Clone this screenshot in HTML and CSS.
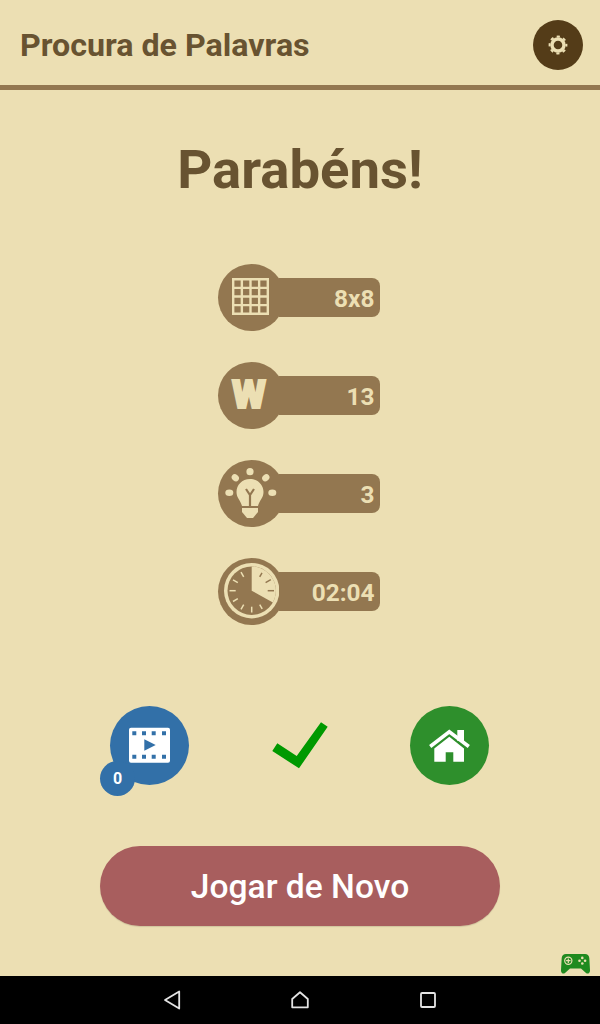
FILE: index.html
```html
<!DOCTYPE html>
<html lang="pt">
<head>
    <meta charset="UTF-8">
    <meta name="viewport" content="width=device-width, initial-scale=1.0">
    <title>Procura de Palavras</title>
    <link rel="stylesheet" href="styles.css">
</head>
<body>

    <header class="top-bar">
        <span class="app-title">Procura de Palavras</span>
        <button class="settings-btn">
            <svg width="24" height="24" viewBox="0 0 24 24">
                <circle cx="12" cy="12" r="6" fill="none" stroke="#ecdfb3" stroke-width="3.4"/>
                <circle cx="12" cy="12" r="8.4" fill="none" stroke="#ecdfb3" stroke-width="2" stroke-dasharray="3.2 3.4" stroke-dashoffset="1.6"/>
            </svg>
        </button>
    </header>

    <main class="content">
        <h1 class="heading">Parabéns!</h1>

        <div class="stats">
            <div class="stat">
                <div class="stat-icon">
                    <svg width="67" height="67" viewBox="0 0 67 67">
                        <path d="M15.2 15.2H49.8V49.8H15.2ZM23.85 15.2V49.8M32.5 15.2V49.8M41.15 15.2V49.8M15.2 23.85H49.8M15.2 32.5H49.8M15.2 41.15H49.8" fill="none" stroke="#ecdfb3" stroke-width="2.4"/>
                    </svg>
                </div>
                <div class="stat-bar">8x8</div>
            </div>
            <div class="stat">
                <div class="stat-icon"><span class="letter-w">W</span></div>
                <div class="stat-bar">13</div>
            </div>
            <div class="stat">
                <div class="stat-icon">
                    <svg width="67" height="67" viewBox="0 0 67 67">
                        <g fill="#ecdfb3">
                            <circle cx="32" cy="11.7" r="3.6"/>
                            <ellipse cx="17.3" cy="17.7" rx="3.9" ry="3.2" transform="rotate(40 17.3 17.7)"/>
                            <ellipse cx="47.8" cy="17.7" rx="3.9" ry="3.2" transform="rotate(-40 47.8 17.7)"/>
                            <ellipse cx="11.3" cy="32.7" rx="4" ry="3.2"/>
                            <ellipse cx="54.3" cy="32.7" rx="4" ry="3.2"/>
                            <path d="M32 19C24 19 18.500 25 18.500 32C18.500 38 22.500 40 24 46H40C41.500 40 45.500 38 45.500 32C45.500 25 40 19 32 19Z"/>
                            <path d="M24 48H40V52L35 58H29L24 52Z"/>
                        </g>
                        <path d="M32 46V35M28 29L32 35L36 29" fill="none" stroke="#937750" stroke-width="2.2"/>
                    </svg>
                </div>
                <div class="stat-bar">3</div>
            </div>
            <div class="stat">
                <div class="stat-icon">
                    <svg width="67" height="67" viewBox="0 0 67 67">
                        <circle cx="33.7" cy="32.7" r="27.7" fill="#ecdfb3"/>
                        <circle cx="33.7" cy="32.7" r="24.200" fill="#937750"/>
                        <path d="M33.7 32.7V8.500A24.200 24.200 0 0 1 54.900 44.400Z" fill="#ecdfb3"/>
                        <g stroke="#937750" stroke-width="1.5">
                            <path d="M41.700 18.800L44 14.800"/>
                            <path d="M47.600 24.700L52.800 21.700"/>
                            <path d="M49.700 32.700H56"/>
                        </g>
                        <g stroke="#ecdfb3" stroke-width="1.5">
                            <path d="M41.700 46.600L44.200 50.900"/>
                            <path d="M33.700 48.700V54.500"/>
                            <path d="M25.700 46.600L23 51.300"/>
                            <path d="M19.800 40.700L15 43.500"/>
                            <path d="M17.700 32.700H11.500"/>
                            <path d="M19.800 24.700L15 21.900"/>
                            <path d="M25.700 18.800L23 14.100"/>
                        </g>
                    </svg>
                </div>
                <div class="stat-bar">02:04</div>
            </div>
        </div>

        <div class="actions">
            <button class="round-btn video-btn">
                <svg width="79" height="79" viewBox="0 0 79 79">
                    <path fill="#fff" fill-rule="evenodd" d="M21 21.700H58Q60 21.700 60 23.700V54.700Q60 56.700 58 56.700H21Q19 56.700 19 54.700V23.700Q19 21.700 21 21.700ZM22.300 25.300V29.300H26.300V25.300ZM32 25.300V29.300H36V25.300ZM41.700 25.300V29.300H45.700V25.300ZM52 25.300V29.300H56V25.300ZM22.300 48.700V52.700H26.300V48.700ZM32 48.700V52.700H36V48.700ZM41.700 48.700V52.700H45.700V48.700ZM52 48.700V52.700H56V48.700ZM34.300 33.300V44.700L45.700 39Z"/>
                </svg>
                <span class="badge">0</span>
            </button>

            <svg class="check" width="56" height="47" viewBox="0 0 56 47">
                <polygon points="0.300,29 5.300,21.300 24.700,34 49,0.300 55.700,4.700 27,46.300" fill="#009900"/>
            </svg>

            <button class="round-btn home-btn">
                <svg width="79" height="79" viewBox="0 0 79 79">
                    <path fill="#fff" d="M47.300 24H54V35H47.300Z"/>
                    <path d="M20.200 40.500L39.300 25.800L58.800 40.500" fill="none" stroke="#fff" stroke-width="3.600"/>
                    <path fill="#fff" d="M24.300 42.500L39.300 30.700L54 42.500V55.700H43.300V46.300H35.700V55.700H24.300Z"/>
                </svg>
            </button>
        </div>

        <button class="play-again">Jogar de Novo</button>

        <svg class="gamepad" width="29" height="20" viewBox="0 0 29 20">
            <path fill="#1f8a1f" d="M5 0H24C26.500 0 28 1.500 28.300 4L29 16C29.200 19 27 20.500 25 19L20 14.500H9L4 19C2 20.500 -0.200 19 0 16L0.700 4C1 1.500 2.500 0 5 0Z"/>
            <circle cx="7.300" cy="6.700" r="3.600" fill="none" stroke="#ecdfb3" stroke-width="1.200"/>
            <path d="M7.300 4.500V8.900M5.100 6.700H9.500" stroke="#ecdfb3" stroke-width="1.200"/>
            <g fill="#ecdfb3">
                <circle cx="21.300" cy="3.900" r="1.300"/>
                <circle cx="21.300" cy="9.500" r="1.300"/>
                <circle cx="18.500" cy="6.700" r="1.300"/>
                <circle cx="24.100" cy="6.700" r="1.300"/>
            </g>
        </svg>
    </main>

    <nav class="nav-bar">
        <div class="nav-item">
            <svg width="18" height="20" viewBox="0 0 18 20">
                <path d="M16.200 1.500V18.500L2 10Z" fill="none" stroke="#e4e4e4" stroke-width="1.800" stroke-linejoin="round"/>
            </svg>
        </div>
        <div class="nav-item">
            <svg width="18" height="18" viewBox="0 0 18 18">
                <path d="M1.200 8L9 1.300L16.800 8V16.300H1.200Z" fill="none" stroke="#e4e4e4" stroke-width="1.800" stroke-linejoin="round"/>
            </svg>
        </div>
        <div class="nav-item">
            <svg width="16" height="16" viewBox="0 0 16 16">
                <rect x="1" y="1" width="14" height="14" rx="1" fill="none" stroke="#e4e4e4" stroke-width="1.800"/>
            </svg>
        </div>
    </nav>

</body>
</html>
```

FILE: styles.css
```css
body {
    font-family: Roboto, "Liberation Sans", sans-serif;
    margin: 0;
    padding: 0;
    height: 1024px;
    overflow: hidden;
    display: flex;
    flex-direction: column;
    background-color: #ecdfb3;
}

button {
    border: none;
    padding: 0;
    font-family: inherit;
}

.top-bar {
    height: 80px;
    flex-shrink: 0;
    display: flex;
    align-items: center;
    justify-content: space-between;
    padding: 5px 17px 0 20px;
    border-bottom: 5px solid #937750;
}

.app-title {
    font-size: 32.2px;
    font-weight: 700;
    color: #685331;
}

.settings-btn {
    width: 50px;
    height: 50px;
    border-radius: 50%;
    background-color: #543c18;
    display: flex;
    align-items: center;
    justify-content: center;
}

.content {
    flex: 1;
    position: relative;
    display: flex;
    flex-direction: column;
    align-items: center;
}

.heading {
    margin: 45px 0 0;
    height: 70px;
    line-height: 69px;
    font-size: 54.5px;
    font-weight: 700;
    color: #685331;
}

.stats {
    margin-top: 59px;
    padding-right: 2px;
    display: flex;
    flex-direction: column;
    gap: 31px;
}

.stat {
    width: 162px;
    display: flex;
    align-items: center;
}

.stat-icon {
    width: 67px;
    height: 67px;
    flex-shrink: 0;
    border-radius: 50%;
    background-color: #937750;
    display: flex;
    align-items: center;
    justify-content: center;
}

.letter-w {
    margin-right: 5px;
    font-size: 39px;
    font-weight: 900;
    line-height: 1;
    color: #ecdfb3;
    -webkit-text-stroke: 2px #ecdfb3;
}

.stat-bar {
    flex: 1;
    height: 39px;
    margin-left: -6px;
    padding-right: 5.5px;
    border-radius: 0 8px 8px 0;
    background-color: #937750;
    color: #ecdfb3;
    font-size: 24.4px;
    font-weight: 700;
    line-height: 41px;
    text-align: right;
}

.actions {
    margin-top: 81px;
    width: 600px;
    box-sizing: border-box;
    padding: 0 111px 0 110px;
    display: flex;
    align-items: center;
    justify-content: space-between;
}

.round-btn {
    position: relative;
    width: 79px;
    height: 79px;
    border-radius: 50%;
    display: block;
}

.round-btn svg {
    display: block;
}

.video-btn {
    background-color: #3270a8;
}

.home-btn {
    background-color: #2e8f2c;
}

.badge {
    position: absolute;
    left: -10px;
    top: 55px;
    width: 35px;
    height: 35px;
    border-radius: 50%;
    background-color: #3270a8;
    color: #fff;
    font-size: 16px;
    font-weight: 700;
    line-height: 35px;
    text-align: center;
}

.check {
    display: block;
    margin-left: 1px;
}

.play-again {
    margin-top: 61px;
    width: 400px;
    height: 80px;
    border-radius: 40px;
    background-color: #a85e5e;
    color: #fff;
    font-size: 33.6px;
    font-weight: 500;
    box-shadow: 0 1px 1px rgba(0, 0, 0, 0.12);
}

.gamepad {
    position: absolute;
    right: 10px;
    bottom: 2px;
}

.nav-bar {
    height: 48px;
    flex-shrink: 0;
    background-color: #000;
    display: flex;
    justify-content: center;
}

.nav-item {
    width: 128px;
    display: flex;
    align-items: center;
    justify-content: center;
}
```
